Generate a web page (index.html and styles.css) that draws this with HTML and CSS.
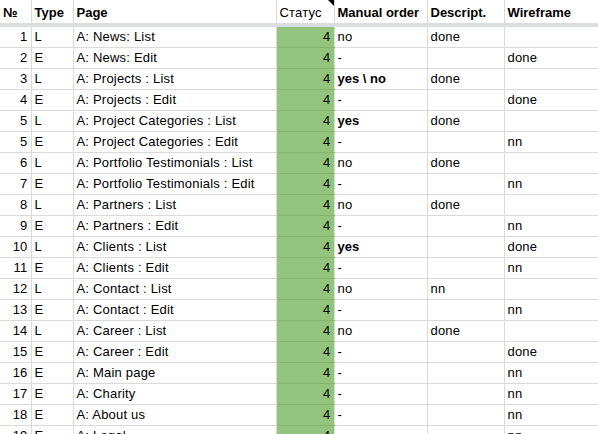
FILE: index.html
```html
<!DOCTYPE html>
<html>
<head>
<meta charset="utf-8">
<link rel="stylesheet" href="styles.css">
</head>
<body>
<table class="sheet">
  <colgroup>
    <col class="c-num"><col class="c-type"><col class="c-page"><col class="c-status"><col class="c-order"><col class="c-desc"><col class="c-wire">
  </colgroup>
  <thead>
    <tr>
      <th>№</th><th>Type</th><th>Page</th><th class="status-h">Статус<span class="note"></span></th><th>Manual order</th><th>Descript.</th><th>Wireframe</th>
    </tr>
  </thead>
  <tbody>
    <tr><td class="num">1</td><td>L</td><td>A: News: List</td><td class="st">4</td><td>no</td><td>done</td><td></td></tr>
    <tr><td class="num">2</td><td>E</td><td>A: News: Edit</td><td class="st">4</td><td>-</td><td></td><td>done</td></tr>
    <tr><td class="num">3</td><td>L</td><td>A: Projects : List</td><td class="st">4</td><td class="b">yes \ no</td><td>done</td><td></td></tr>
    <tr><td class="num">4</td><td>E</td><td>A: Projects : Edit</td><td class="st">4</td><td>-</td><td></td><td>done</td></tr>
    <tr><td class="num">5</td><td>L</td><td>A: Project Categories : List</td><td class="st">4</td><td class="b">yes</td><td>done</td><td></td></tr>
    <tr><td class="num">5</td><td>E</td><td>A: Project Categories : Edit</td><td class="st">4</td><td>-</td><td></td><td>nn</td></tr>
    <tr><td class="num">6</td><td>L</td><td>A: Portfolio Testimonials : List</td><td class="st">4</td><td>no</td><td>done</td><td></td></tr>
    <tr><td class="num">7</td><td>E</td><td>A: Portfolio Testimonials : Edit</td><td class="st">4</td><td>-</td><td></td><td>nn</td></tr>
    <tr><td class="num">8</td><td>L</td><td>A: Partners : List</td><td class="st">4</td><td>no</td><td>done</td><td></td></tr>
    <tr><td class="num">9</td><td>E</td><td>A: Partners : Edit</td><td class="st">4</td><td>-</td><td></td><td>nn</td></tr>
    <tr><td class="num">10</td><td>L</td><td>A: Clients : List</td><td class="st">4</td><td class="b">yes</td><td></td><td>done</td></tr>
    <tr><td class="num">11</td><td>E</td><td>A: Clients : Edit</td><td class="st">4</td><td>-</td><td></td><td>nn</td></tr>
    <tr><td class="num">12</td><td>L</td><td>A: Contact : List</td><td class="st">4</td><td>no</td><td>nn</td><td></td></tr>
    <tr><td class="num">13</td><td>E</td><td>A: Contact : Edit</td><td class="st">4</td><td>-</td><td></td><td>nn</td></tr>
    <tr><td class="num">14</td><td>L</td><td>A: Career : List</td><td class="st">4</td><td>no</td><td>done</td><td></td></tr>
    <tr><td class="num">15</td><td>E</td><td>A: Career : Edit</td><td class="st">4</td><td>-</td><td></td><td>done</td></tr>
    <tr><td class="num">16</td><td>E</td><td>A: Main page</td><td class="st">4</td><td>-</td><td></td><td>nn</td></tr>
    <tr><td class="num">17</td><td>E</td><td>A: Charity</td><td class="st">4</td><td>-</td><td></td><td>nn</td></tr>
    <tr><td class="num">18</td><td>E</td><td>A: About us</td><td class="st">4</td><td>-</td><td></td><td>nn</td></tr>
    <tr><td class="num">19</td><td>E</td><td>A: Legal</td><td class="st">4</td><td></td><td></td><td>nn</td></tr>
  </tbody>
</table>
</body>
</html>
```
FILE: styles.css
```css
html, body {
  margin: 0;
  padding: 0;
  background: #fff;
  overflow: hidden;
}
body {
  width: 598px;
  height: 434px;
}
.sheet {
  border-collapse: collapse;
  table-layout: fixed;
  width: 640px;
  font-family: "Liberation Sans", Arial, sans-serif;
  font-size: 13px;
  color: #000;
}
.c-num { width: 31px; }
.c-type { width: 42px; }
.c-page { width: 203px; }
.c-status { width: 58px; }
.c-order { width: 93px; }
.c-desc { width: 77px; }
.c-wire { width: 136px; }

.sheet th,
.sheet td {
  border: 1px solid #dadada;
  padding: 0 3px;
  height: 20px;
  line-height: 20px;
  white-space: nowrap;
  overflow: hidden;
  text-align: left;
  box-sizing: border-box;
  letter-spacing: 0.2px;
}
.sheet tr > :first-child { border-left: none; }
.sheet thead th {
  border-top: none;
  border-bottom: 4px solid #dadde2;
  font-weight: bold;
  letter-spacing: 0;
  height: 24px;
  line-height: 21px;
  padding-top: 2px;
  vertical-align: top;
  position: relative;
}
.sheet thead th.status-h {
  font-weight: normal;
  letter-spacing: 0.2px;
}
.note {
  position: absolute;
  top: 0;
  right: 0;
  width: 0;
  height: 0;
  border-top: 6px solid #000;
  border-left: 6px solid transparent;
}
.sheet td.num {
  text-align: right;
}
.sheet td.st {
  background: #93c47d;
  text-align: right;
  border-top-color: #86b56f;
  border-bottom-color: #86b56f;
}
.sheet td.b {
  font-weight: bold;
  letter-spacing: 0;
}
```
